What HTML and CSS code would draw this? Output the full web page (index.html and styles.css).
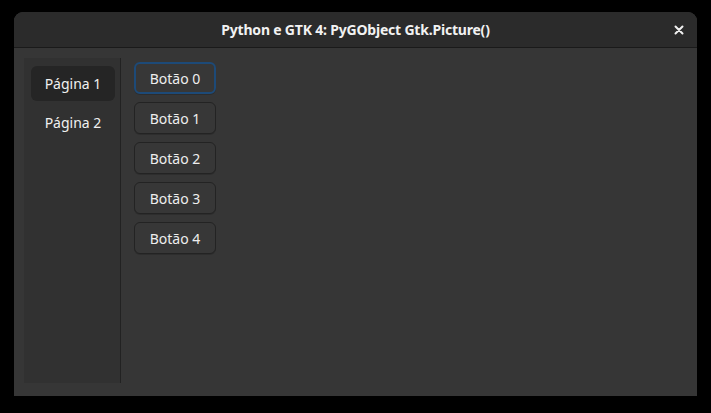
FILE: index.html
```html
<!DOCTYPE html>
<html>
<head>
<meta charset="utf-8">
<link rel="stylesheet" href="styles.css">
</head>
<body>
<div class="window">
  <div class="titlebar">
    <span class="title">Python e GTK 4: PyGObject Gtk.Picture()</span>
    <span class="close">
      <svg width="10" height="10" viewBox="0 0 10 10"><path d="M1.5 1.5 L8.5 8.5 M8.5 1.5 L1.5 8.5" stroke="#f0f0f0" stroke-width="2" stroke-linecap="round"/></svg>
    </span>
  </div>
  <div class="body">
    <div class="sidebar">
      <div class="row selected">Página 1</div>
      <div class="row">Página 2</div>
    </div>
    <div class="sep"></div>
    <div class="buttons">
      <div class="btn focus">Botão 0</div>
      <div class="btn">Botão 1</div>
      <div class="btn">Botão 2</div>
      <div class="btn">Botão 3</div>
      <div class="btn">Botão 4</div>
    </div>
  </div>
</div>
</body>
</html>
```
FILE: styles.css
```css
html, body {
  margin: 0;
  padding: 0;
  background: #000;
  width: 711px;
  height: 413px;
  overflow: hidden;
  font-family: "Noto Sans", "Open Sans", sans-serif;
}
.window {
  margin: 12px 0 0 14px;
  width: 683px;
  height: 384px;
  background: #363636;
  border-radius: 9px 9px 0 0;
  overflow: hidden;
  display: flex;
  flex-direction: column;
}
.titlebar {
  height: 36px;
  background: #2b2b2b;
  border-bottom: 1px solid #1a1a1a;
  box-sizing: border-box;
  display: flex;
  align-items: center;
  justify-content: center;
  position: relative;
  flex: none;
}
.title {
  color: #f2f2f2;
  font-weight: bold;
  font-size: 14px;
  letter-spacing: -0.2px;
}
.close {
  position: absolute;
  right: 13px;
  top: 13px;
  width: 10px;
  height: 10px;
  display: flex;
}
.body {
  flex: 1;
  display: flex;
  padding: 10px 0 13px 10px;
}
.sidebar {
  width: 96px;
  background: #313131;
  padding: 8px 5px 0 7px;
  box-sizing: border-box;
  display: flex;
  flex-direction: column;
  gap: 4px;
}
.row {
  height: 35px;
  display: flex;
  align-items: center;
  justify-content: center;
  color: #f0f0f0;
  font-size: 14px;
  border-radius: 6px;
}
.row.selected {
  background: #252525;
}
.sep {
  width: 1px;
  background: #222;
  flex: none;
}
.buttons {
  display: flex;
  flex-direction: column;
  gap: 8px;
  padding: 4px 0 0 13px;
}
.btn {
  width: 82px;
  height: 32px;
  box-sizing: border-box;
  border: 1px solid #232323;
  border-radius: 6px;
  background: #373737;
  color: #eeeeee;
  font-size: 14px;
  display: flex;
  align-items: center;
  justify-content: center;
  box-shadow: 0 1px 0 rgba(0,0,0,0.15);
}
.btn.focus {
  border: 2px solid #1d4a78;
}
```
